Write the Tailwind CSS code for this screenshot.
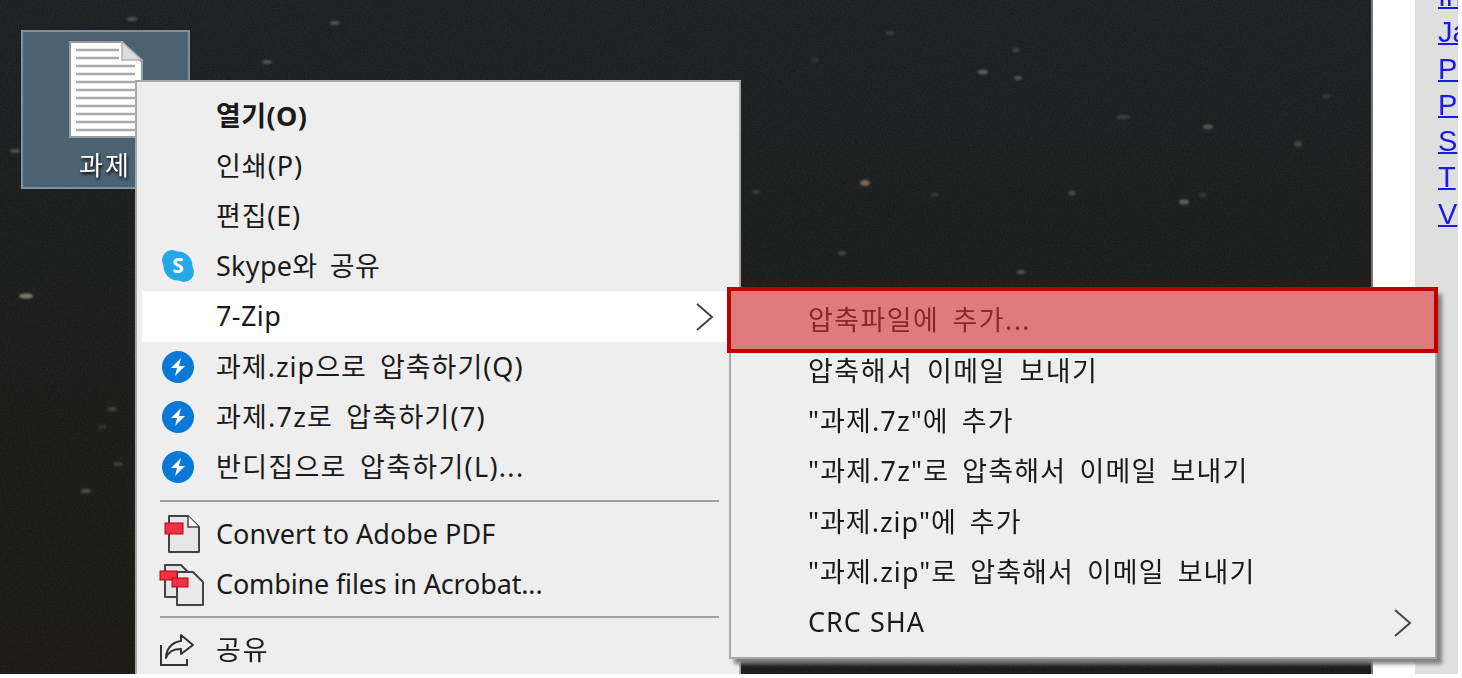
<!DOCTYPE html>
<html lang="ko">
<head>
<meta charset="UTF-8">
<title>7-Zip context menu</title>
<script src="https://cdn.jsdelivr.net/npm/@tailwindcss/browser@4"></script>
</head>
<body class="bg-white">
<div class="relative w-[1462px] h-[678px] overflow-hidden bg-white font-['Noto_Sans','Noto_Sans_CJK_KR',sans-serif] text-[27px] text-[#1a1a1a]">

  <!-- screen area -->
  <div class="absolute left-0 top-0 w-[1458px] h-[674px] flex">
    <div class="relative w-[1373px] h-full bg-gradient-to-b from-[#222527] to-[#201f1b] border-r-2 border-[#777]">
      <svg class="absolute inset-0" width="1371" height="674">
        <filter id="grain">
          <feTurbulence type="fractalNoise" baseFrequency="0.7" numOctaves="2" seed="4" />
          <feColorMatrix values="0 0 0 0 0  0 0 0 0 0  0 0 0 0 0  0 0 0 -1.6 1" />
        </filter>
        <rect width="1371" height="674" filter="url(#grain)" opacity="0.4" />
      </svg>
      <svg class="absolute inset-0 blur-[1.2px] opacity-60" width="1371" height="674" fill="#777775">
        <ellipse cx="132" cy="19" rx="5" ry="2" />
        <ellipse cx="335" cy="23" rx="5" ry="2" />
        <ellipse cx="267" cy="62" rx="5" ry="2" />
        <ellipse cx="15" cy="151" rx="5" ry="2" />
        <ellipse cx="26" cy="296" rx="7" ry="2.5" fill="#c4b8ac" />
        <ellipse cx="112" cy="409" rx="5" ry="2" fill="#5a5a58" />
        <ellipse cx="102" cy="427" rx="4" ry="2" fill="#444" />
        <ellipse cx="118" cy="464" rx="5" ry="2" fill="#5a5a58" />
        <ellipse cx="86" cy="491" rx="5" ry="2" />
        <ellipse cx="865" cy="183" rx="5" ry="3" fill="#b89c88" />
        <ellipse cx="983" cy="72" rx="5" ry="2.5" fill="#8a8a88" />
        <ellipse cx="1018" cy="78" rx="4" ry="2" />
        <ellipse cx="890" cy="33" rx="4" ry="2" fill="#555" />
        <ellipse cx="1016" cy="50" rx="4" ry="2" fill="#555" />
        <ellipse cx="1123" cy="117" rx="7" ry="2" fill="#555" />
        <ellipse cx="1208" cy="127" rx="5" ry="2.5" />
        <ellipse cx="1298" cy="144" rx="4" ry="3" fill="#5f5f5d" />
        <ellipse cx="756" cy="192" rx="4" ry="2" fill="#555" />
        <ellipse cx="935" cy="195" rx="4" ry="2" fill="#4a4a48" />
        <ellipse cx="1072" cy="193" rx="4" ry="2.5" fill="#666" />
        <ellipse cx="1184" cy="202" rx="5" ry="2.5" fill="#8a8a88" />
        <ellipse cx="1203" cy="195" rx="4" ry="2" fill="#4a4a48" />
        <ellipse cx="842" cy="253" rx="4" ry="2" fill="#666" />
        <ellipse cx="1021" cy="272" rx="4" ry="2" />
        <ellipse cx="1326" cy="96" rx="4" ry="2" fill="#4a4a48" />
        <ellipse cx="815" cy="60" rx="4" ry="2" fill="#444" />
      </svg>

      <!-- selected desktop icon -->
      <div class="absolute left-[21px] top-[30px] w-[169px] h-[159px] bg-[#4b6273] border-2 border-[#7d93a3] blur-[0.4px]">
        <svg class="absolute left-[46px] top-[9px]" width="76" height="98" viewBox="0 0 76 98">
          <path d="M1 1H53L73 21V96H1Z" fill="#fff" stroke="#9a9a9a" stroke-width="2" />
          <path d="M53 1V19H73Z" fill="#dcdcdc" stroke="#b0b0b0" stroke-width="1.5" />
          <path d="M7 9H50M7 17H50M7 25H66M7 33H66M7 41H66M7 49H66M7 57H66M7 65H66M7 73H66M7 81H66M7 89H66" stroke="#aaa" stroke-width="2.5" />
        </svg>
        <span class="absolute left-[56px] top-[117px] text-[26px] tracking-[2px] leading-[32px] text-white [text-shadow:1px_2px_3px_#000]">과제</span>
      </div>
    </div>
    <div class="w-[42px] h-full bg-white"></div>
    <div class="w-[43px] h-full bg-[#dfdfdf] text-[#1a1ae6] underline decoration-2 leading-[36.3px] text-[29px] font-['Liberation_Sans',sans-serif] overflow-hidden blur-[0.4px]">
      <div class="pl-[23px] -mt-[22px] flex flex-col">
        <a>In</a>
        <a>Ja</a>
        <a>Pe</a>
        <a>Pe</a>
        <a>S</a>
        <a>T</a>
        <a>V</a>
      </div>
    </div>
  </div>

  <!-- main context menu -->
  <div class="absolute left-[135px] top-[80px] w-[606px] h-[594px] bg-[#eeeeee] border-l-2 border-t-2 border-r-2 border-[#a8a8a8] pl-[5px] pt-[9px] blur-[0.4px]">
    <div class="h-[50px] flex items-center pl-[74px] font-bold tracking-[0.4px]">열기(O)</div>
    <div class="h-[50px] flex items-center pl-[74px] tracking-[1px]">인쇄(P)</div>
    <div class="h-[50px] flex items-center pl-[74px] tracking-[0.8px]">편집(E)</div>
    <div class="h-[50px] flex items-center relative pl-[74px]">
      <svg class="absolute left-[19px] top-[8px]" width="34" height="34" viewBox="0 0 34 34">
        <circle cx="11" cy="11" r="10" fill="#25a9e6" />
        <circle cx="23" cy="23" r="10" fill="#25a9e6" />
        <circle cx="17" cy="17" r="14.5" fill="#25a9e6" />
        <text x="17" y="24" text-anchor="middle" font-size="21" font-weight="700" fill="#fff" font-family="Noto Sans">S</text>
      </svg>
      <span class="tracking-[0.3px] [word-spacing:5px]">Skype와 공유</span>
    </div>
    <div class="h-[51px] flex items-center relative pl-[74px] bg-white mr-[-2px]">
      <span class="tracking-[0.4px]">7-Zip</span>
      <svg class="absolute left-[553px] top-[11px]" width="20" height="30" viewBox="0 0 20 30" fill="none" stroke="#444" stroke-width="2">
        <path d="M2 2L17 15L2 28" />
      </svg>
    </div>
    <div class="h-[50px] flex items-center relative pl-[74px]">
      <svg class="absolute left-[19px] top-[8px]" width="34" height="34" viewBox="0 0 34 34">
        <circle cx="17" cy="17" r="16" fill="#0a78d7" />
        <path d="M20 8L10 18H16L14 26L24 16H18Z" fill="#fff" />
      </svg>
      <span class="tracking-[1px] [word-spacing:5px]">과제.zip으로 압축하기(Q)</span>
    </div>
    <div class="h-[50px] flex items-center relative pl-[74px]">
      <svg class="absolute left-[19px] top-[8px]" width="34" height="34" viewBox="0 0 34 34">
        <circle cx="17" cy="17" r="16" fill="#0a78d7" />
        <path d="M20 8L10 18H16L14 26L24 16H18Z" fill="#fff" />
      </svg>
      <span class="tracking-[1.2px] [word-spacing:5px]">과제.7z로 압축하기(7)</span>
    </div>
    <div class="h-[50px] flex items-center relative pl-[74px]">
      <svg class="absolute left-[19px] top-[8px]" width="34" height="34" viewBox="0 0 34 34">
        <circle cx="17" cy="17" r="16" fill="#0a78d7" />
        <path d="M20 8L10 18H16L14 26L24 16H18Z" fill="#fff" />
      </svg>
      <span class="tracking-[1.3px] [word-spacing:5px]">반디집으로 압축하기(L)...</span>
    </div>
    <div class="h-[2px] mt-[8px] mb-[7px] ml-[18px] mr-[20px] bg-[#a0a0a0]"></div>
    <div class="h-[50px] flex items-center relative pl-[74px]">
      <svg class="absolute left-[17px] top-[6px]" width="44" height="40" viewBox="0 0 44 40">
        <path d="M10 1H29L40 12V37H10Z" fill="#e6e6e6" stroke="#444" stroke-width="2" stroke-linejoin="round" />
        <path d="M29 1V12H40" fill="#fff" stroke="#444" stroke-width="1.5" />
        <rect x="6" y="8" width="18" height="11" fill="#ee3344" stroke="#b01" />
      </svg>
      Convert to Adobe PDF
    </div>
    <div class="h-[50px] flex items-center relative pl-[74px]">
      <svg class="absolute left-[15px] top-[4px]" width="48" height="44" viewBox="0 0 48 44">
        <path d="M8 2H24L33 11V34H8Z" fill="#e6e6e6" stroke="#444" stroke-width="2" stroke-linejoin="round" />
        <path d="M20 9H36L46 19V42H20Z" fill="#eaeaea" stroke="#444" stroke-width="2" stroke-linejoin="round" />
        <rect x="3" y="8" width="17" height="9" fill="#ee3344" stroke="#b01" />
        <rect x="15" y="15" width="16" height="9" fill="#ee3344" stroke="#b01" />
      </svg>
      <span class="tracking-[-0.15px]">Combine files in Acrobat...</span>
    </div>
    <div class="h-[2px] my-[7px] ml-[18px] mr-[20px] bg-[#a0a0a0]"></div>
    <div class="h-[50px] flex items-center relative pl-[74px]">
      <svg class="absolute left-[17px] top-[8px]" width="36" height="34" viewBox="0 0 36 34" fill="none" stroke="#333" stroke-width="2">
        <path d="M2 12V32H28V26" />
        <path d="M22 2L34 12L22 21V16C14 16 9 19 7 25C7 16 13 9 22 8Z" stroke-linejoin="round" />
      </svg>
      <span class="tracking-[2px]">공유</span>
    </div>
  </div>

  <!-- 7-Zip submenu -->
  <div class="absolute left-[729px] top-[289px] w-[708px] h-[370px] bg-[#eeeeee] border-2 border-[#a8a8a8] shadow-[5px_5px_4px_#808080] pl-[77px] pt-[5px] blur-[0.4px]">
    <div class="h-[50px] flex items-center"></div>
    <div class="h-[50px] flex items-center tracking-[1.5px] [word-spacing:5px]">압축해서 이메일 보내기</div>
    <div class="h-[50px] flex items-center tracking-[1.1px] [word-spacing:5px]">"과제.7z"에 추가</div>
    <div class="h-[51px] flex items-center tracking-[1.15px] [word-spacing:5px]">"과제.7z"로 압축해서 이메일 보내기</div>
    <div class="h-[50px] flex items-center tracking-[1px] [word-spacing:5px]">"과제.zip"에 추가</div>
    <div class="h-[50px] flex items-center tracking-[1.05px] [word-spacing:5px]">"과제.zip"로 압축해서 이메일 보내기</div>
    <div class="h-[51px] flex items-center relative">
      <span class="tracking-[1px]">CRC SHA</span>
      <svg class="absolute left-[585px] top-[11px]" width="20" height="30" viewBox="0 0 20 30" fill="none" stroke="#444" stroke-width="2">
        <path d="M2 2L17 15L2 28" />
      </svg>
    </div>
  </div>

  <!-- red highlight over first submenu row -->
  <div class="absolute left-[727px] top-[287px] w-[711px] h-[66px] border-[4px] border-[#c00000] bg-[#e07b7b] flex items-center pl-[77px] text-[#8f2429] tracking-[1.4px] [word-spacing:5px] blur-[0.3px]">압축파일에 추가...</div>
</div>
</body>
</html>
